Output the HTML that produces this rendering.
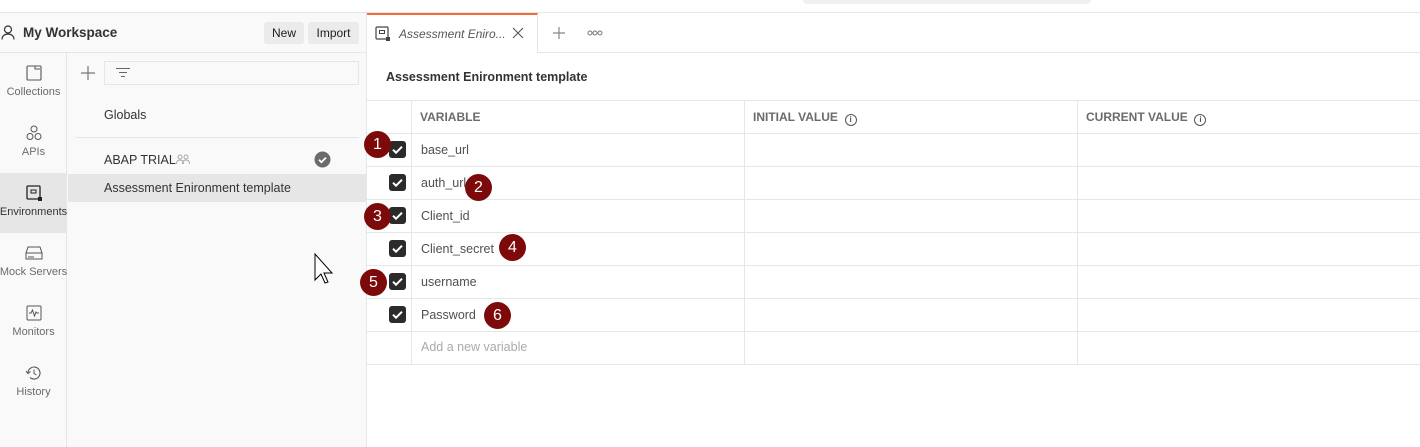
<!DOCTYPE html>
<html><head><meta charset="utf-8"><style>
*{box-sizing:border-box;margin:0;padding:0}
body{width:1420px;height:447px;overflow:hidden;background:#fff;font-family:"Liberation Sans",sans-serif;font-size:12px;color:#212121;position:relative}
.abs{position:absolute}
.topline{left:0;top:12px;width:1420px;height:1px;background:#e6e6e6}
.side{left:0;top:13px;width:367px;height:434px;background:#f9f9f9;border-right:1px solid #e6e6e6}
.nav{left:0;top:53px;width:67px;height:394px;border-right:1px solid #e6e6e6}
.navitem{position:absolute;left:0;width:67px;height:60px;color:#6b6b6b;font-size:11px;overflow:hidden;white-space:nowrap;display:flex;flex-direction:column;align-items:center}
.navitem svg{display:block;margin:12px 0 5px;flex:none}
.btn{top:22px;height:22px;background:#ebebeb;border-radius:3px;font-size:12px;line-height:22px;text-align:center;color:#212121}
.badge{width:27px;height:27px;border-radius:50%;background:#7d0a0a;color:#fff;font-size:16px;line-height:27px;text-align:center}
.cb{width:17px;height:17px;border-radius:3px;background:#2b2b2b}
.cb svg{display:block}
.row{left:367px;width:1053px;height:1px;background:#e6e6e6}
.vt{color:#505050;font-size:12.5px}
.th{top:110px;font-weight:bold;color:#6b6b6b;font-size:12px}
.info{display:inline-block;width:12px;height:12px;border:1px solid #555;border-radius:50%;font-size:8px;line-height:10px;text-align:center;vertical-align:-1px;color:#555}
</style></head><body>
<div class="abs" style="left:803px;top:0;width:288px;height:4px;background:#f0f0f0;border-radius:0 0 4px 4px"></div>
<div class="abs topline"></div>
<div class="abs side"></div>
<div class="abs" style="left:0;top:52px;width:367px;height:1px;background:#e6e6e6"></div>
<svg class="abs" style="left:1px;top:25px" width="14" height="15" viewBox="0 0 14 15"><circle cx="7" cy="4.5" r="3.5" fill="none" stroke="#333" stroke-width="1.2"/><path d="M1 14.5c0-3.5 2.7-5.5 6-5.5s6 2 6 5.5" fill="none" stroke="#333" stroke-width="1.2"/></svg>
<div class="abs" style="left:23px;top:25px;font-size:13.5px;font-weight:bold;color:#333">My Workspace</div>
<div class="abs btn" style="left:264px;width:40px">New</div>
<div class="abs btn" style="left:308px;width:51px">Import</div>
<div class="abs nav"></div>
<div class="navitem" style="top:53px"><svg width="16" height="16"><rect x="1" y="1" width="14" height="14" rx="1" fill="none" stroke="#555" stroke-width="1.1"/><path d="M9 1v3l5 0" fill="none" stroke="#555"/></svg>Collections</div>
<div class="navitem" style="top:113px"><svg width="16" height="16"><circle cx="8" cy="4" r="3" fill="none" stroke="#555"/><circle cx="4" cy="11.5" r="3" fill="none" stroke="#555"/><circle cx="12" cy="11.5" r="3" fill="none" stroke="#555"/></svg>APIs</div>
<div class="navitem" style="top:173px;background:#e6e6e6;color:#333"><svg width="16" height="16"><rect x="1" y="1" width="13" height="13" rx="1" fill="none" stroke="#222" stroke-width="1.3"/><rect x="5" y="5" width="5" height="3" fill="none" stroke="#222"/><rect x="12" y="12" width="4" height="4" fill="#222"/></svg>Environments</div>
<div class="navitem" style="top:233px"><svg width="18" height="16"><path d="M1 8l2-6h12l2 6v6H1z M1 8h16" fill="none" stroke="#555"/><path d="M4 11v2M6 11v2M8 11v2" stroke="#555"/></svg>Mock Servers</div>
<div class="navitem" style="top:293px"><svg width="16" height="16"><rect x="1" y="1" width="14" height="14" rx="1" fill="none" stroke="#555"/><path d="M3 8h2l1.5-3 2 6 1.5-4 1 1h2" fill="none" stroke="#555"/></svg>Monitors</div>
<div class="navitem" style="top:353px"><svg width="17" height="16"><path d="M3 8a6 6 0 1 1 2 4.5" fill="none" stroke="#555" stroke-width="1.1"/><path d="M1 6l2 2.5 2.5-2" fill="none" stroke="#555"/><path d="M9 4.5v4l2.5 1.5" fill="none" stroke="#555"/></svg>History</div>
<svg class="abs" style="left:81px;top:66px" width="14" height="14"><path d="M7 0v14M0 7h14" stroke="#777" stroke-width="1.2"/></svg>
<div class="abs" style="left:104px;top:61px;width:255px;height:24px;border:1px solid #e6e6e6;background:#f9f9f9"></div>
<svg class="abs" style="left:115px;top:67px" width="16" height="12"><path d="M1 1.5h14M4 5.5h8M6 9.5h4" stroke="#666" stroke-width="1.1"/></svg>
<div class="abs" style="left:104px;top:108px;font-size:12.5px;color:#333">Globals</div>
<div class="abs" style="left:76px;top:137px;width:283px;height:1px;background:#e6e6e6"></div>
<div class="abs" style="left:104px;top:153px;font-size:12.5px;color:#333">ABAP TRIAL</div>
<svg class="abs" style="left:176px;top:154px" width="14" height="11"><circle cx="4" cy="3" r="2" fill="none" stroke="#aaa"/><circle cx="10" cy="3" r="2" fill="none" stroke="#aaa"/><path d="M0.5 10c0-3 1.5-4 3.5-4s3.5 1 3.5 4M6.5 10c0-3 1.5-4 3.5-4s3.5 1 3.5 4" fill="none" stroke="#aaa"/></svg>
<svg class="abs" style="left:314px;top:151px" width="17" height="17"><circle cx="8.5" cy="8.5" r="8" fill="#6b6b6b"/><path d="M5 8.8l2.4 2.4 4.6-4.6" fill="none" stroke="#fff" stroke-width="1.8"/></svg>
<div class="abs" style="left:68px;top:174px;width:298px;height:28px;background:#e6e6e6"></div>
<div class="abs" style="left:104px;top:181px;font-size:12.5px;color:#333">Assessment Enironment template</div>
<svg class="abs" style="left:312px;top:252px" width="30" height="40"><path d="M3 2v26l6-6 4 9 3-1-4-9h8z" fill="#fff" stroke="#000" stroke-width="1"/></svg>
<!-- tabs -->
<div class="abs" style="left:367px;top:13px;width:171px;height:40px;border-top:2px solid #f26b3a;border-right:1px solid #e6e6e6;background:#fff"></div>
<div class="abs" style="left:538px;top:52px;width:882px;height:1px;background:#e6e6e6"></div>
<svg class="abs" style="left:375px;top:26px" width="15" height="15"><rect x="1" y="1" width="12" height="12" rx="1" fill="none" stroke="#444" stroke-width="1.2"/><rect x="4.5" y="4.5" width="5" height="3" fill="none" stroke="#444"/><rect x="11" y="11" width="4" height="4" fill="#444"/></svg>
<div class="abs" style="left:399px;top:27px;font-style:italic;color:#555;font-size:12px">Assessment Eniro...</div>
<svg class="abs" style="left:512px;top:27px" width="12" height="12"><path d="M1 1l10 10M11 1L1 11" stroke="#555" stroke-width="1.1"/></svg>
<svg class="abs" style="left:552px;top:26px" width="14" height="14"><path d="M7 1v12M1 7h12" stroke="#888" stroke-width="1.2"/></svg>
<svg class="abs" style="left:587px;top:30px" width="16" height="6"><circle cx="3" cy="3" r="2" fill="none" stroke="#777"/><circle cx="8" cy="3" r="2" fill="none" stroke="#777"/><circle cx="13" cy="3" r="2" fill="none" stroke="#777"/></svg>
<div class="abs" style="left:386px;top:70px;font-weight:bold;font-size:12.5px;color:#333">Assessment Enironment template</div>
<!-- table -->
<div class="abs row" style="top:100px"></div>
<div class="abs row" style="top:133px"></div>
<div class="abs row" style="top:166px"></div>
<div class="abs row" style="top:199px"></div>
<div class="abs row" style="top:232px"></div>
<div class="abs row" style="top:265px"></div>
<div class="abs row" style="top:298px"></div>
<div class="abs row" style="top:331px"></div>
<div class="abs row" style="top:364px"></div>
<div class="abs" style="left:411px;top:100px;width:1px;height:264px;background:#e6e6e6"></div>
<div class="abs" style="left:744px;top:100px;width:1px;height:264px;background:#e6e6e6"></div>
<div class="abs" style="left:1077px;top:100px;width:1px;height:264px;background:#e6e6e6"></div>
<div class="abs th" style="left:420px">VARIABLE</div>
<div class="abs th" style="left:753px">INITIAL VALUE &nbsp;<span class="info">i</span></div>
<div class="abs th" style="left:1086px">CURRENT VALUE &nbsp;<span class="info">i</span></div>
<div class="abs cb" style="left:389px;top:141px"><svg width="17" height="17"><path d="M4 8.7l3 3 6-6" fill="none" stroke="#fff" stroke-width="2"/></svg></div>
<div class="abs cb" style="left:389px;top:174px"><svg width="17" height="17"><path d="M4 8.7l3 3 6-6" fill="none" stroke="#fff" stroke-width="2"/></svg></div>
<div class="abs cb" style="left:389px;top:207px"><svg width="17" height="17"><path d="M4 8.7l3 3 6-6" fill="none" stroke="#fff" stroke-width="2"/></svg></div>
<div class="abs cb" style="left:389px;top:240px"><svg width="17" height="17"><path d="M4 8.7l3 3 6-6" fill="none" stroke="#fff" stroke-width="2"/></svg></div>
<div class="abs cb" style="left:389px;top:273px"><svg width="17" height="17"><path d="M4 8.7l3 3 6-6" fill="none" stroke="#fff" stroke-width="2"/></svg></div>
<div class="abs cb" style="left:389px;top:306px"><svg width="17" height="17"><path d="M4 8.7l3 3 6-6" fill="none" stroke="#fff" stroke-width="2"/></svg></div>
<div class="abs vt" style="left:421px;top:143px">base_url</div>
<div class="abs vt" style="left:421px;top:176px">auth_url</div>
<div class="abs vt" style="left:421px;top:209px">Client_id</div>
<div class="abs vt" style="left:421px;top:242px">Client_secret</div>
<div class="abs vt" style="left:421px;top:275px">username</div>
<div class="abs vt" style="left:421px;top:308px">Password</div>
<div class="abs vt" style="left:421px;top:340px;color:#aaa">Add a new variable</div>
<div class="abs badge" style="left:364px;top:131px">1</div>
<div class="abs badge" style="left:465px;top:174px">2</div>
<div class="abs badge" style="left:364px;top:203px">3</div>
<div class="abs badge" style="left:499px;top:234px">4</div>
<div class="abs badge" style="left:360px;top:269px">5</div>
<div class="abs badge" style="left:484px;top:302px">6</div>
</body></html>
